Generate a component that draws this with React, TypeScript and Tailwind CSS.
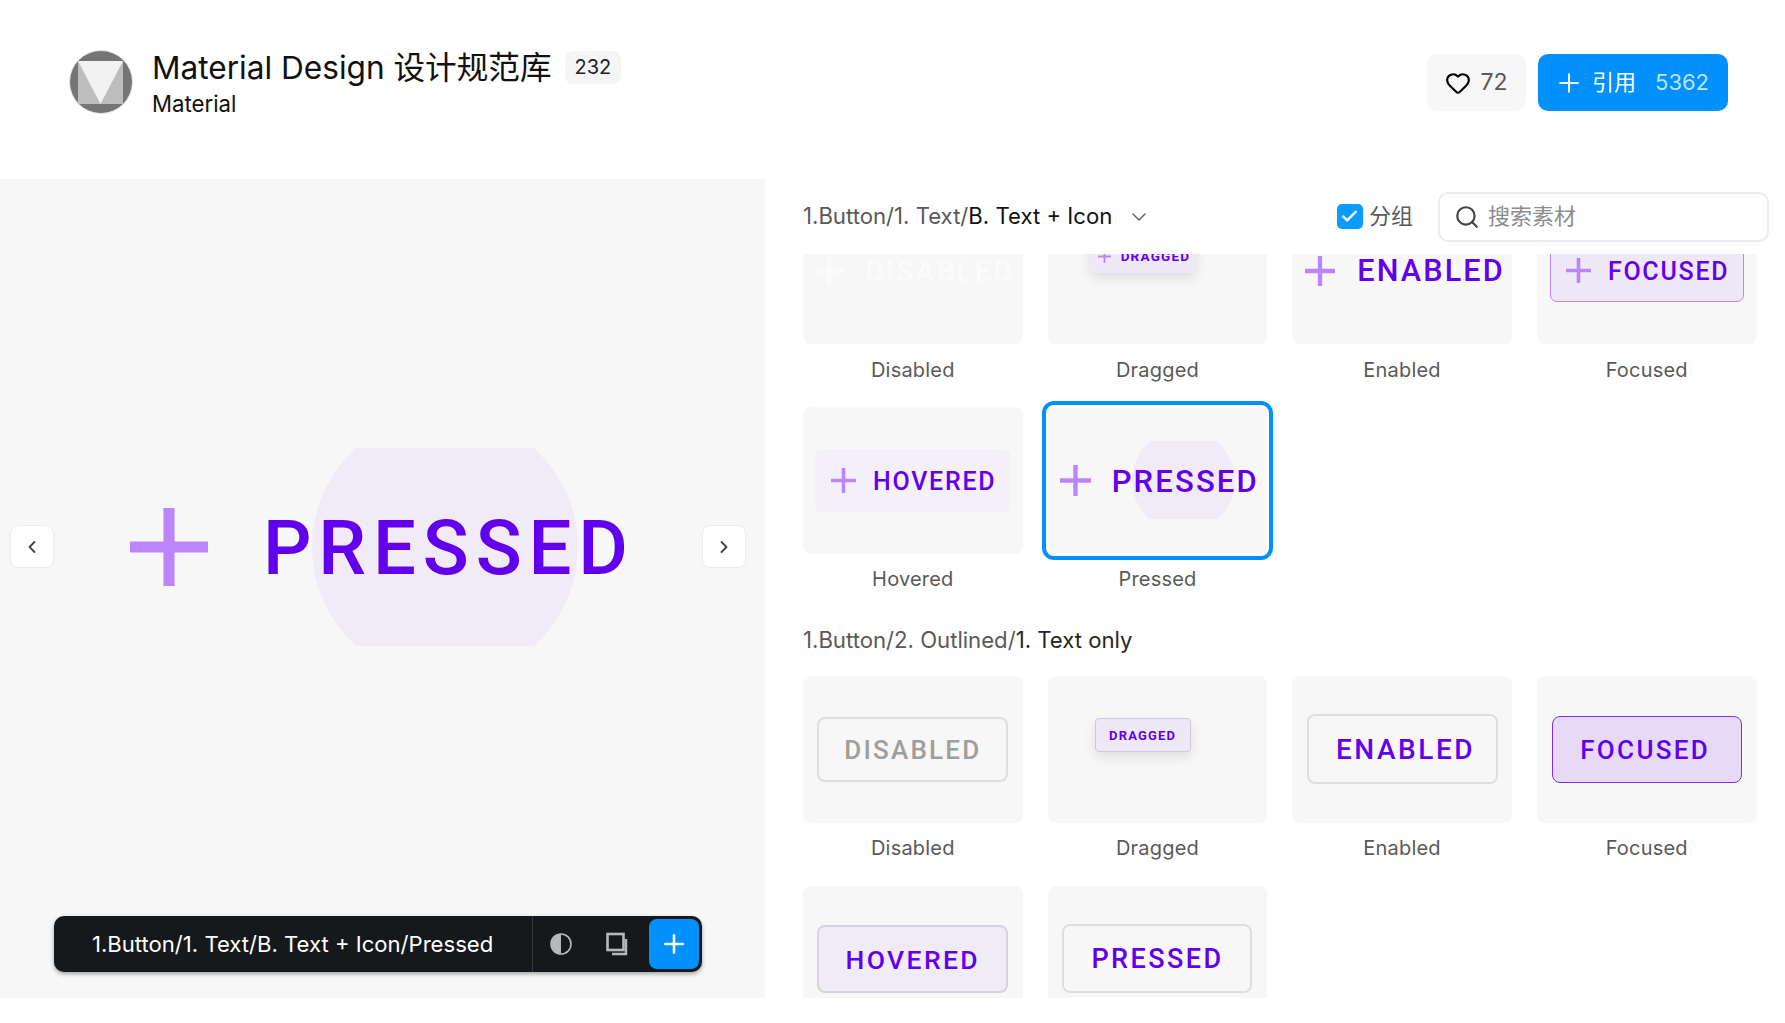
import React from 'react';
import { Check, ChevronDown, ChevronLeft, ChevronRight, Heart, Plus, Search } from 'lucide-react';

const PlusMark: React.FC<{ className: string }> = ({ className }) => (
    <svg viewBox="0 0 14 14" className={`shrink-0 fill-[#bb86fc] ${className}`}>
        <path d="M6 0h2v6h6v2H8v6H6V8H0V6h6z" />
    </svg>
);

const Logo: React.FC = () => (
    <svg viewBox="0 0 64 64" className="h-16 w-16 shrink-0">
        <circle cx="32" cy="32" r="31.5" fill="#757575" stroke="#e6e6e6" strokeWidth="1" />
        <rect x="9" y="11" width="45" height="43" fill="#bdbdbd" />
        <path d="M9 11h45L31.5 54z" fill="#f2f2f2" />
    </svg>
);

const Card: React.FC<{ label: string; selected?: boolean; className?: string; children: React.ReactNode }> = ({ label, selected, className, children }) => (
    <div className="h-[209.5px]">
        <div className={`relative flex h-[146.5px] rounded-lg bg-[#f7f7f7] ${className ?? ''}`}>
            {children}
            {selected && <div className="absolute -inset-[6px] rounded-xl border-[4px] border-[#0091ff]" />}
        </div>
        <p className="mt-[10.5px] text-center text-[20px] leading-[30px] tracking-[0.01em] text-[#595959]">{label}</p>
    </div>
);

// button captions inside the variant thumbnails
const caption = "translate-y-px font-[family-name:Roboto,sans-serif] font-medium whitespace-nowrap leading-none";
const textCaption = `${caption} tracking-[0.07em] text-[#6200ee]`;
const outlineCaption = `${caption} tracking-[0.09em] text-[#6200ee]`;
const smallCaption = "font-[family-name:Roboto,sans-serif] font-bold whitespace-nowrap leading-none tracking-[0.09em] text-[#6200ee]";

const Breadcrumb: React.FC<{ path: string; leaf: string; leafClass: string }> = ({ path, leaf, leafClass }) => (
    <span className="text-[22.15px] leading-[30px] text-[#595959]">
        {path}
        <span className={leafClass}>{leaf}</span>
    </span>
);

const App: React.FC = () => {
    return (
        <div className="h-[1023px] w-[1785px] overflow-hidden bg-white font-[family-name:Inter,'Noto_Sans_CJK_SC',sans-serif]">
            {/* library header */}
            <header className="flex h-[179px] items-start justify-between pl-[69px] pr-[57px] pt-[50px]">
                <div className="flex gap-[19px]">
                    <Logo />
                    <div>
                        <div className="flex items-center gap-[13px]">
                            <h1 className="translate-y-px text-[31.6px] leading-[34px] text-[#111]">Material Design 设计规范库</h1>
                            <span className="rounded-lg bg-[#f5f5f5] px-[10px] py-[4px] text-[20px] leading-[25px] text-[#222]">232</span>
                        </div>
                        <p className="mt-[6px] text-[22.2px] leading-[28px] text-[#111]">Material</p>
                    </div>
                </div>
                <div className="mt-1 flex gap-3">
                    <button className="flex h-[57px] w-[99px] items-center justify-center gap-[9px] rounded-[10px] bg-[#f7f7f7] text-[23px] text-[#595959]">
                        <Heart size={26} strokeWidth={2} className="text-black" />
                        72
                    </button>
                    <button className="flex h-[57px] w-[190px] items-center rounded-[10px] bg-[#0091ff] pl-[16px] text-[22px] text-white">
                        <Plus size={30} strokeWidth={1.6} />
                        <span className="ml-[8px]">引用</span>
                        <span className="ml-[19px] text-[#bfe3ff]">5362</span>
                    </button>
                </div>
            </header>

            <main className="flex h-[819px]">
                {/* large preview */}
                <section className="relative flex w-[765px] shrink-0 flex-col bg-[#f7f7f7]">
                    <div className="relative ml-[130px] mt-[269px] flex h-[198px] w-[498px] items-center overflow-hidden blur-[0.6px]">
                        <div className="absolute left-[182px] top-[-34px] h-[266px] w-[266px] rounded-full bg-[#f1ebf8]" />
                        <PlusMark className="relative h-[78px] w-[78px]" />
                        <span className={`relative ml-[55px] text-[76px] tracking-[0.09em] ${caption} text-[#6200ee]`}>PRESSED</span>
                    </div>
                    <button className="absolute left-[10px] top-[346px] flex h-[43px] w-[44px] items-center justify-center rounded-lg border border-[#ececec] bg-white text-[#444]">
                        <ChevronLeft size={20} strokeWidth={2.2} />
                    </button>
                    <button className="absolute left-[702px] top-[346px] flex h-[43px] w-[44px] items-center justify-center rounded-lg border border-[#ececec] bg-white text-[#444]">
                        <ChevronRight size={20} strokeWidth={2.2} />
                    </button>
                    <div className="mb-[26px] ml-[54px] mt-auto flex h-[56px] w-[648px] items-center rounded-[10px] bg-[#16191c] shadow-[0_2px_4px_rgba(0,0,0,0.35)]">
                        <span className="flex-1 translate-y-px pl-[38px] text-[22.1px] text-white">1.Button/1. Text/B. Text + Icon/Pressed</span>
                        <div className="flex h-full items-center border-l border-[#33363a] pr-[3px]">
                            <svg viewBox="0 0 24 24" className="ml-[16px] h-6 w-6">
                                <circle cx="12" cy="12" r="10" fill="none" stroke="#b8b8b8" strokeWidth="1.6" />
                                <path d="M12 2a10 10 0 0 0 0 20z" fill="#b8b8b8" />
                            </svg>
                            <svg viewBox="0 0 24 24" className="ml-[32px] h-6 w-6 fill-none stroke-[#b8b8b8]">
                                <rect x="2.5" y="2" width="16" height="16" strokeWidth="2.6" />
                                <path d="M21 7v15H7" strokeWidth="2.4" />
                            </svg>
                            <div className="ml-[20px] flex h-[50px] w-[50px] items-center justify-center rounded-lg bg-[#0091ff] text-white">
                                <Plus size={30} strokeWidth={2} />
                            </div>
                        </div>
                    </div>
                </section>

                {/* variant browser */}
                <section className="flex min-w-0 flex-1 flex-col pl-[38px]">
                    <div className="flex h-[75px] shrink-0 items-center pr-[16px]">
                        <span className="-translate-y-px">
                            <Breadcrumb path="1.Button/1. Text/" leaf="B. Text + Icon" leafClass="text-[#111]" />
                        </span>
                        <ChevronDown size={24} strokeWidth={1.4} className="ml-[15px] text-[#595959]" />
                        <label className="ml-auto flex items-center gap-[6px] text-[22px] text-[#595959]">
                            <span className="flex h-[25px] w-[26px] items-center justify-center rounded-[5px] bg-[#0a9dff] text-white">
                                <Check size={19} strokeWidth={3} />
                            </span>
                            分组
                        </label>
                        <div className="ml-[25px] flex h-[50px] w-[331px] items-center rounded-[10px] border-2 border-[#ececec] pl-[14px] text-[22px] text-[#8c8c8c]">
                            <Search size={26} strokeWidth={2} className="text-[#444]" />
                            <span className="ml-[8px]">搜索素材</span>
                        </div>
                    </div>

                    <div className="min-h-0 flex-1 overflow-hidden">
                        <div className="-mt-[56.5px] w-[953.5px]">
                            <div className="grid grid-cols-4 gap-x-[25px]">
                                <Card label="Disabled" className="items-center pl-[12px]">
                                    <svg viewBox="0 0 14 14" className="h-[28px] w-[28px] shrink-0 fill-[#fbfbfb]">
                                        <path d="M6 0h2v6h6v2H8v6H6V8H0V6h6z" />
                                    </svg>
                                    <span className={`ml-[22px] text-[28px] tracking-[0.09em] text-[#fbfbfb] ${caption}`}>DISABLED</span>
                                </Card>
                                <Card label="Dragged" className="items-start pl-[42px] pt-[42.5px]">
                                    <div className="flex h-[33px] w-[106px] items-center rounded bg-[#efe8f8] pl-[8px] shadow-[0_5px_12px_rgba(0,0,0,0.1)]">
                                        <PlusMark className="h-[13px] w-[13px]" />
                                        <span className={`ml-[10px] text-[13.5px] ${smallCaption}`}>DRAGGED</span>
                                    </div>
                                </Card>
                                <Card label="Enabled" className="items-center pl-[13px]">
                                    <PlusMark className="h-[30px] w-[30px]" />
                                    <span className={`ml-[22px] text-[30.6px] ${textCaption}`}>ENABLED</span>
                                </Card>
                                <Card label="Focused" className="items-center pl-[13px]">
                                    <div className="flex h-[62px] w-[194px] items-center rounded-[7px] border border-[#bb86fc] bg-[#efe8f8] pl-[15px]">
                                        <PlusMark className="h-[25px] w-[25px]" />
                                        <span className={`ml-[17px] text-[25px] ${textCaption}`}>FOCUSED</span>
                                    </div>
                                </Card>
                                <Card label="Hovered" className="items-center pl-[12px]">
                                    <div className="flex h-[63px] w-[195px] items-center rounded-[7px] bg-[#f3f0f7] pl-[16px]">
                                        <PlusMark className="h-[25px] w-[25px]" />
                                        <span className={`ml-[17px] text-[25px] ${textCaption}`}>HOVERED</span>
                                    </div>
                                </Card>
                                <Card label="Pressed" selected className="items-center pl-[12px]">
                                    <div className="absolute left-[84px] top-[34px] h-[78px] w-[103px] overflow-hidden">
                                        <div className="absolute left-0 top-[-12.5px] h-[103px] w-[103px] rounded-full bg-[#f1ebf8]" />
                                    </div>
                                    <PlusMark className="relative h-[31px] w-[31px]" />
                                    <span className={`relative ml-[21px] text-[31px] ${textCaption}`}>PRESSED</span>
                                </Card>
                            </div>

                            <div className="h-[59.5px] pt-[8px]">
                                <Breadcrumb path="1.Button/2. Outlined/" leaf="1. Text only" leafClass="text-[#262626]" />
                            </div>

                            <div className="grid grid-cols-4 gap-x-[25px]">
                                <Card label="Disabled" className="items-center justify-center">
                                    <div className="flex h-[65px] w-[191px] items-center justify-center rounded-lg border-2 border-[#dedede]">
                                        <span className={`text-[26px] tracking-[0.085em] text-[#9e9e9e] ${caption}`}>DISABLED</span>
                                    </div>
                                </Card>
                                <Card label="Dragged" className="items-start pl-[47px] pt-[42px]">
                                    <div className="flex h-[34px] w-[96px] items-center justify-center rounded border border-[#cfc8dc] bg-[#efe8f8] shadow-[0_5px_12px_rgba(0,0,0,0.1)]">
                                        <span className={`text-[13px] ${smallCaption}`}>DRAGGED</span>
                                    </div>
                                </Card>
                                <Card label="Enabled" className="items-center justify-center">
                                    <div className="flex h-[70px] w-[191px] items-center justify-center rounded-lg border-2 border-[#dedede] pl-[7px]">
                                        <span className={`text-[28px] ${outlineCaption}`}>ENABLED</span>
                                    </div>
                                </Card>
                                <Card label="Focused" className="items-center justify-center">
                                    <div className="flex h-[67px] w-[190px] items-center justify-center rounded-lg border-[1.5px] border-[#7b2ff0] bg-[#e7daf6] pr-[3px]">
                                        <span className={`text-[26px] ${outlineCaption}`}>FOCUSED</span>
                                    </div>
                                </Card>
                                <Card label="Hovered" className="items-center justify-center">
                                    <div className="flex h-[68px] w-[191px] items-center justify-center rounded-lg border-2 border-[#d8d3e0] bg-[#efecf7]">
                                        <span className={`-translate-y-px text-[26.5px] ${outlineCaption}`}>HOVERED</span>
                                    </div>
                                </Card>
                                <Card label="Pressed" className="items-center justify-center">
                                    <div className="flex h-[69px] w-[190px] items-center justify-center rounded-lg border-2 border-[#dedede]">
                                        <span className={`text-[27px] ${outlineCaption}`}>PRESSED</span>
                                    </div>
                                </Card>
                            </div>
                        </div>
                    </div>
                </section>
            </main>
        </div>
    );
};

export default App;
